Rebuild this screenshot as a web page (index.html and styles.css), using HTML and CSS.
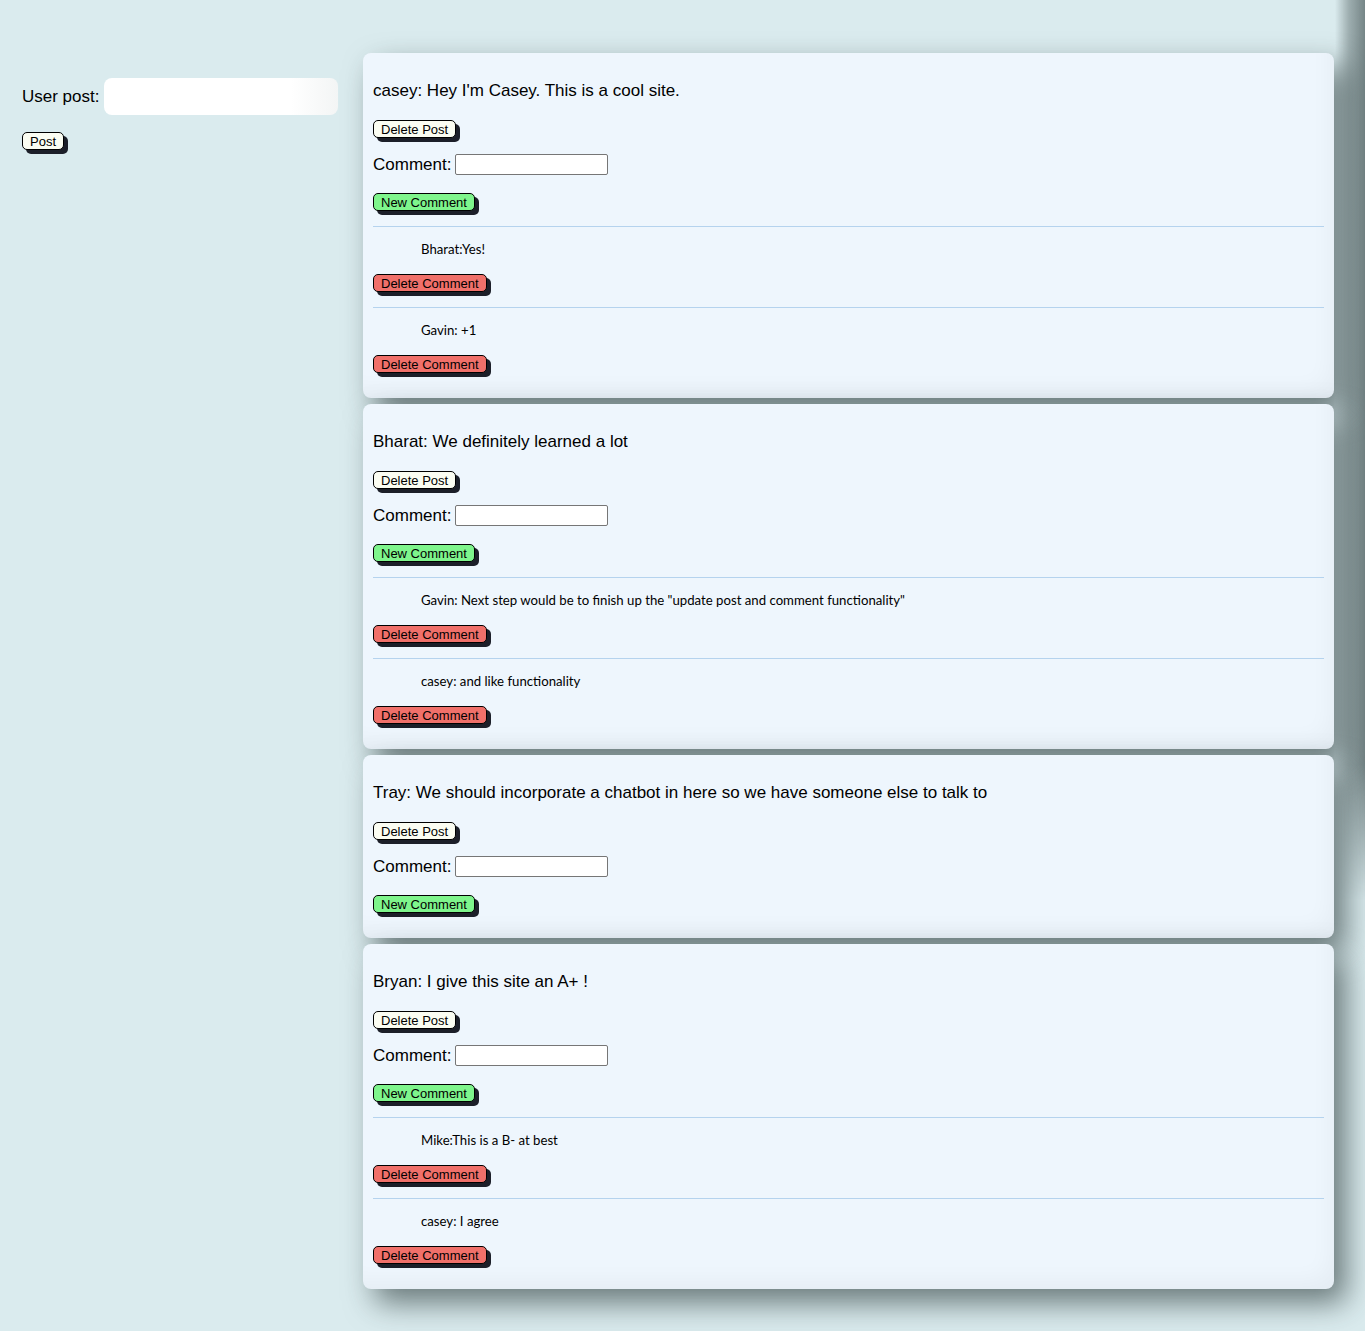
FILE: index.html
```html
<!DOCTYPE html>
<html>
<head>
<meta charset="utf-8">
<title>Posts</title>
<link rel="stylesheet" href="styles.css">
</head>
<body>
<div class="edge-shadow"></div>
<div class="page">
  <aside class="sidebar">
    <div class="new-post">
      <label class="big-label">User post:</label>
      <input class="post-input" type="text">
    </div>
    <button class="btn btn-white">Post</button>
  </aside>
  <main class="feed">
    <section class="card">
      <p class="post-text">casey: Hey I'm Casey. This is a cool site.</p>
      <button class="btn btn-white">Delete Post</button>
      <div class="comment-row"><label class="big-label">Comment:</label><input class="comment-input" type="text"></div>
      <button class="btn btn-green">New Comment</button>
      <div class="comment"><p class="comment-text">Bharat:Yes!</p><button class="btn btn-red">Delete Comment</button></div>
      <div class="comment"><p class="comment-text">Gavin: +1</p><button class="btn btn-red">Delete Comment</button></div>
    </section>
    <section class="card">
      <p class="post-text">Bharat: We definitely learned a lot</p>
      <button class="btn btn-white">Delete Post</button>
      <div class="comment-row"><label class="big-label">Comment:</label><input class="comment-input" type="text"></div>
      <button class="btn btn-green">New Comment</button>
      <div class="comment"><p class="comment-text">Gavin: Next step would be to finish up the "update post and comment functionality"</p><button class="btn btn-red">Delete Comment</button></div>
      <div class="comment"><p class="comment-text">casey: and like functionality</p><button class="btn btn-red">Delete Comment</button></div>
    </section>
    <section class="card">
      <p class="post-text">Tray: We should incorporate a chatbot in here so we have someone else to talk to</p>
      <button class="btn btn-white">Delete Post</button>
      <div class="comment-row"><label class="big-label">Comment:</label><input class="comment-input" type="text"></div>
      <button class="btn btn-green">New Comment</button>
    </section>
    <section class="card">
      <p class="post-text">Bryan: I give this site an A+ !</p>
      <button class="btn btn-white">Delete Post</button>
      <div class="comment-row"><label class="big-label">Comment:</label><input class="comment-input" type="text"></div>
      <button class="btn btn-green">New Comment</button>
      <div class="comment"><p class="comment-text">Mike:This is a B- at best</p><button class="btn btn-red">Delete Comment</button></div>
      <div class="comment"><p class="comment-text">casey: I agree</p><button class="btn btn-red">Delete Comment</button></div>
    </section>
  </main>
</div>
</body>
</html>
```

FILE: styles.css
```css
html, body {
  margin: 0;
  padding: 0;
}
body {
  background: #daebee;
  font-family: "Liberation Sans", Arial, sans-serif;
  color: #000;
  min-height: 1331px;
  overflow: hidden;
  position: relative;
}
.edge-shadow {
  position: absolute;
  right: 0;
  top: 0;
  width: 30px;
  height: 900px;
  background: linear-gradient(90deg, rgba(50, 65, 65, 0) 0%, rgba(50, 65, 65, 0.35) 45%, rgba(50, 65, 65, 0.6) 100%);
  -webkit-mask-image: linear-gradient(180deg, #000 0%, #000 85%, transparent 100%);
  mask-image: linear-gradient(180deg, #000 0%, #000 85%, transparent 100%);
  pointer-events: none;
}
.page {
  display: flex;
  align-items: flex-start;
  padding: 53px 31px 40px 22px;
}
.sidebar {
  width: 341px;
  flex: none;
  padding-top: 25px;
}
.new-post {
  display: flex;
  align-items: center;
}
.big-label {
  font-size: 17px;
  line-height: 20px;
}
.post-input {
  margin-left: 5px;
  width: 234px;
  height: 37px;
  box-sizing: border-box;
  border: none;
  border-radius: 8px;
  background: linear-gradient(90deg, #ffffff 0%, #ffffff 80%, #f3f5f5 100%);
  outline: none;
}
.sidebar .btn {
  margin-top: 17px;
}
.feed {
  flex: 1;
  display: flex;
  flex-direction: column;
  gap: 6px;
  position: relative;
  z-index: 1;
}
.card {
  background: #eef6fd;
  border-radius: 8px;
  padding: 28px 10px 25px 10px;
  box-shadow: 12px 14px 30px rgba(30, 45, 45, 0.6), inset -14px -18px 22px -10px rgba(0, 0, 0, 0.04);
  position: relative;
}
.post-text {
  margin: 0;
  font-size: 17px;
  line-height: 20px;
}
.btn {
  display: block;
  font-family: "Liberation Sans", Arial, sans-serif;
  font-size: 13px;
  line-height: 15px;
  padding: 0 7px;
  height: 18px;
  border: 1px solid #000;
  border-radius: 5px;
  box-shadow: 4px 4px 0 #1c1f29;
  color: #000;
  cursor: pointer;
}
.btn-white { background: #fbfdf2; }
.btn-green { background: #7ef58c; }
.btn-red { background: #f0706a; }
.card > .btn-white {
  margin-top: 19px;
}
.comment-row {
  display: flex;
  align-items: center;
  margin-top: 16px;
}
.comment-input {
  margin-left: 4px;
  width: 153px;
  height: 21px;
  box-sizing: border-box;
  border: 1px solid #767676;
  border-radius: 2px;
  background: #fff;
}
.card > .btn-green {
  margin-top: 18px;
}
.comment {
  border-top: 1px solid #b5d3ee;
  margin-top: 15px;
  padding-top: 14px;
}
.comment-text {
  margin: 0 0 0 48px;
  font-family: "Lato", "Open Sans", sans-serif;
  font-size: 13.2px;
  line-height: 16px;
}
.comment .btn {
  margin-top: 17px;
}
```
